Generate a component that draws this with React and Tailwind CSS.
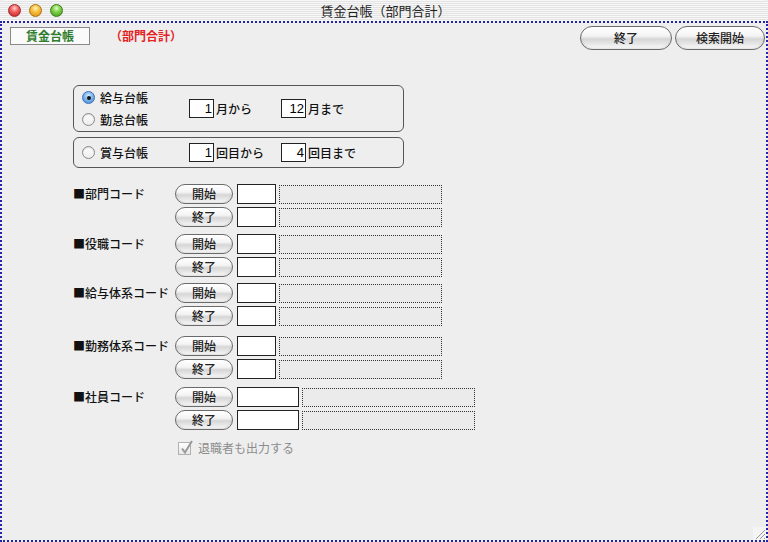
import React from 'react';

const jp = { fontFamily: '"Noto Sans CJK JP", "Liberation Sans", sans-serif' };

function AquaButton({ children, className = '' }) {
  return (
    <div
      className={`flex items-center justify-center rounded-full border border-[#6a6a6a] bg-[linear-gradient(180deg,#ffffff_0%,#f4f4f4_40%,#d6d6d6_55%,#e9e9e9_80%,#ffffff_100%)] shadow-[inset_0_1px_1px_rgba(255,255,255,0.9),inset_0_-1px_2px_rgba(0,0,0,0.12)] text-[12px] font-medium text-[#222] ${className}`}
    >
      {children}
    </div>
  );
}

function Radio({ checked }) {
  if (checked) {
    return (
      <div className="w-[13px] h-[13px] rounded-full border border-[#3d6fb8] bg-[radial-gradient(circle_at_50%_35%,#d6ecff_0%,#7fb6ec_45%,#3a84d6_100%)] flex items-center justify-center">
        <div className="w-[4px] h-[4px] rounded-full bg-[#111]" />
      </div>
    );
  }
  return (
    <div className="w-[13px] h-[13px] rounded-full border border-[#8a8a8a] bg-[linear-gradient(180deg,#ffffff,#ececec)] shadow-[inset_0_1px_1px_rgba(0,0,0,0.15)]" />
  );
}

function NumBox({ value, className = '' }) {
  return (
    <div
      className={`h-[19px] w-[25px] border border-[#222] bg-white flex items-center justify-end pr-[1px] text-[13px] font-normal text-black ${className}`}
      style={{ fontFamily: '"Liberation Sans", sans-serif' }}
    >
      {value}
    </div>
  );
}

function CodeSection({ label, wide, className = '' }) {
  const inputW = wide ? 'w-[62px]' : 'w-[39px]';
  const fieldW = wide ? 'w-[173px]' : 'w-[163px]';
  return (
    <div className={`flex ${className}`}>
      <div className="w-[102px] h-[20px] flex items-center text-[12px] font-medium text-[#111]">
        ■{label}
      </div>
      <div className="flex flex-col gap-[3px]">
        {['開始', '終了'].map((t) => (
          <div key={t} className="flex items-center h-[20px]">
            <AquaButton className="w-[58px] h-[20px]">{t}</AquaButton>
            <div className={`ml-[4px] h-[20px] ${inputW} border border-[#222] bg-white`} />
            <div className={`ml-[3px] h-[19px] ${fieldW} border border-dotted border-[#333] bg-[#ebebeb]`} />
          </div>
        ))}
      </div>
    </div>
  );
}

export default function App() {
  return (
    <div className="w-[768px] h-[542px] flex flex-col bg-[#eeeeee] overflow-hidden" style={jp}>
      {/* title bar */}
      <div className="relative h-[21px] shrink-0 flex items-center bg-[repeating-linear-gradient(180deg,#f7f7f7_0px,#f7f7f7_1px,#e4e4e4_1px,#e4e4e4_2px)] rounded-t-[5px]">
        <div className="flex items-center gap-[8px] pl-[8px]">
          <div className="w-[13px] h-[13px] rounded-full border border-[#9c2a2a] bg-[radial-gradient(circle_at_50%_30%,#ffd0d0_0%,#f06060_40%,#c41818_100%)]" />
          <div className="w-[13px] h-[13px] rounded-full border border-[#a87010] bg-[radial-gradient(circle_at_50%_30%,#fff2c0_0%,#f8c040_40%,#d88a08_100%)]" />
          <div className="w-[13px] h-[13px] rounded-full border border-[#3f7a18] bg-[radial-gradient(circle_at_50%_30%,#e0ffc8_0%,#7ed04a_40%,#3e9a14_100%)]" />
        </div>
        <div className="flex-1 text-center text-[13px] text-[#222] pr-[60px]">賃金台帳（部門合計）</div>
      </div>

      {/* content */}
      <div className="relative flex-1 border-2 border-dotted border-[#2424a8] bg-[#eeeeee]">
        {/* header row */}
        <div className="flex items-start pt-[3px] pl-[8px] pr-[1px]">
          <div className="mt-[1px] w-[80px] h-[18px] border border-[#8a8a8a] bg-[#fafafa] flex items-center justify-center text-[12px] font-bold text-[#2f7d2f]">
            賃金台帳
          </div>
          <div className="mt-[1px] ml-[20px] h-[18px] flex items-center text-[12px] font-bold text-[#e52222]">
            （部門合計）
          </div>
          <div className="flex-1" />
          <AquaButton className="w-[92px] h-[24px]">終了</AquaButton>
          <AquaButton className="ml-[3px] w-[90px] h-[24px]">検索開始</AquaButton>
        </div>

        <div className="ml-[71px] mt-[35px] flex flex-col">
          {/* box 1 */}
          <div className="w-[331px] h-[47px] border border-[#555] rounded-[6px] flex items-center text-[12px] font-medium text-[#111]">
            <div className="w-[115px] pl-[8px] flex flex-col gap-[1px]">
              <div className="h-[21px] flex items-center gap-[5px]">
                <Radio checked />
                給与台帳
              </div>
              <div className="h-[21px] flex items-center gap-[5px]">
                <Radio />
                勤怠台帳
              </div>
            </div>
            <div className="w-[92px] flex items-center">
              <NumBox value="1" />
              <span className="ml-[2px]">月から</span>
            </div>
            <div className="flex items-center">
              <NumBox value="12" />
              <span className="ml-[2px]">月まで</span>
            </div>
          </div>

          {/* box 2 */}
          <div className="mt-[5px] w-[331px] h-[31px] border border-[#555] rounded-[6px] flex items-center text-[12px] font-medium text-[#111]">
            <div className="w-[115px] pl-[8px] h-[21px] flex items-center gap-[5px]">
              <Radio />
              賞与台帳
            </div>
            <div className="w-[92px] flex items-center">
              <NumBox value="1" className="h-[18px] w-[24px]" />
              <span className="ml-[2px]">回目から</span>
            </div>
            <div className="flex items-center">
              <NumBox value="4" className="h-[18px] w-[24px]" />
              <span className="ml-[2px]">回目まで</span>
            </div>
          </div>

          {/* code sections */}
          <CodeSection label="部門コード" className="mt-[16px]" />
          <CodeSection label="役職コード" className="mt-[7px]" />
          <CodeSection label="給与体系コード" className="mt-[6px]" />
          <CodeSection label="勤務体系コード" className="mt-[10px]" />
          <CodeSection label="社員コード" wide className="mt-[8px]" />

          <div className="mt-[9px] ml-[105px] flex items-center gap-[7px] text-[12px] text-[#8c8c8c]">
            <div className="relative w-[13px] h-[13px] border border-[#b0b0b0] bg-[linear-gradient(180deg,#ffffff,#e8e8e8)]">
              <svg className="absolute left-[1px] -top-[3px]" width="13" height="15" viewBox="0 0 13 15">
                <path d="M2 8.5 L5 12.5 L12 1" fill="none" stroke="#9a9a9a" strokeWidth="2" />
              </svg>
            </div>
            退職者も出力する
          </div>
        </div>

        {/* resize grip */}
        <svg className="absolute right-0 bottom-0" width="13" height="13" viewBox="0 0 13 13">
          <rect width="13" height="13" fill="#f4f4f4" />
          <path d="M12 3 L3 12 M12 7 L7 12 M12 11 L11 12" stroke="#9a9a9a" strokeWidth="1" />
        </svg>
      </div>
    </div>
  );
}
